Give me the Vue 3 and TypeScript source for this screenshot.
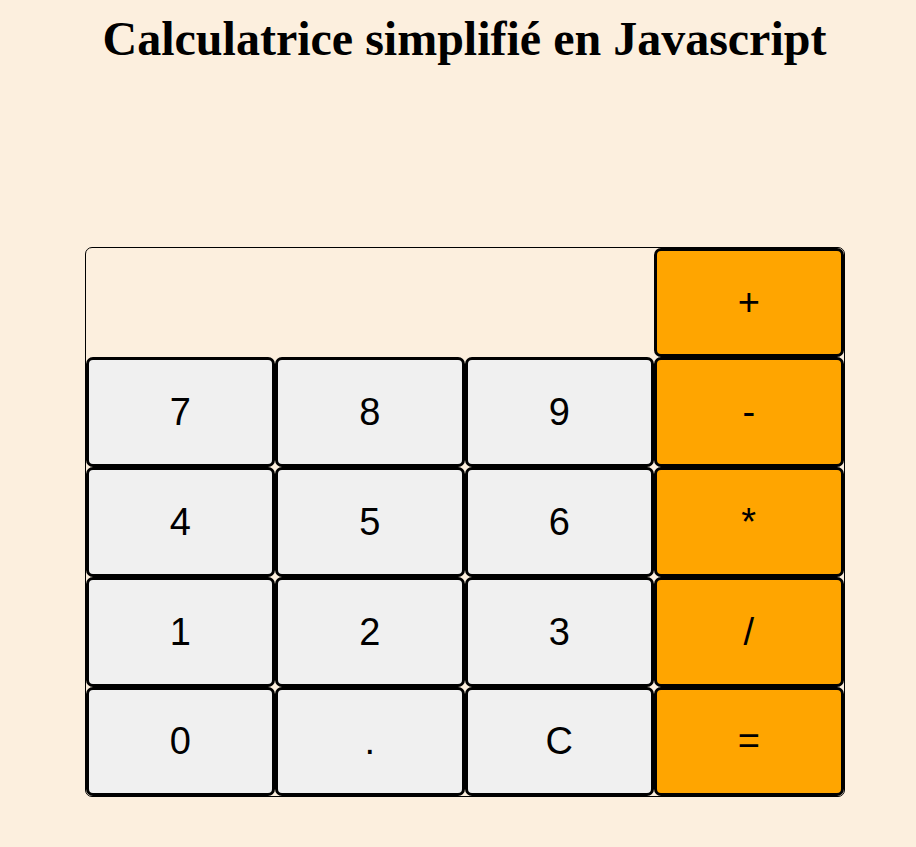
<script setup lang="ts">
import { ref } from 'vue'

interface Key {
  label: string
  operator?: boolean
}

const display = ref('')

const firstOperator: Key = { label: '+', operator: true }

const keys: Key[] = [
  { label: '7' },
  { label: '8' },
  { label: '9' },
  { label: '-', operator: true },
  { label: '4' },
  { label: '5' },
  { label: '6' },
  { label: '*', operator: true },
  { label: '1' },
  { label: '2' },
  { label: '3' },
  { label: '/', operator: true },
  { label: '0' },
  { label: '.' },
  { label: 'C' },
  { label: '=', operator: true },
]

const pad: Key[] = [firstOperator, ...keys]

// Left operand and the operator waiting for its right operand.
let pending: { value: number; operator: string } | null = null

function compute(a: number, b: number, operator: string): number {
  switch (operator) {
    case '+':
      return a + b
    case '-':
      return a - b
    case '*':
      return a * b
    default:
      return a / b
  }
}

function press(key: Key): void {
  if (key.label === 'C') {
    display.value = ''
    pending = null
  } else if (key.label === '=') {
    if (pending && display.value) {
      display.value = String(compute(pending.value, Number(display.value), pending.operator))
      pending = null
    }
  } else if (key.operator) {
    if (display.value) {
      const value = Number(display.value)
      pending = {
        value: pending ? compute(pending.value, value, pending.operator) : value,
        operator: key.label,
      }
      display.value = ''
    }
  } else if (key.label !== '.' || !display.value.includes('.')) {
    display.value += key.label
  }
}
</script>

<template>
  <main class="page">
    <h1 class="title">Calculatrice simplifié en Javascript</h1>
    <section class="calculator">
      <output class="display">{{ display }}</output>
      <button
        v-for="key in pad"
        :key="key.label"
        type="button"
        class="key"
        :class="{ operator: key.operator }"
        @click="press(key)"
      >
        {{ key.label }}
      </button>
    </section>
  </main>
</template>

<style>
body {
  margin: 0;
  background: #fcefde;
}
</style>

<style scoped>
.page {
  box-sizing: border-box;
  min-height: 100vh;
  padding: 11px 0 50px 13px;
  display: flex;
  flex-direction: column;
  align-items: center;
  color: #000;
}

.title {
  margin: 0 0 181px;
  font-family: "Liberation Serif", "Times New Roman", serif;
  font-size: 48px;
  font-weight: 700;
  line-height: 55px;
  text-align: center;
}

.calculator {
  box-sizing: border-box;
  width: 100%;
  max-width: 760px;
  flex: 1;
  display: grid;
  grid-template-columns: repeat(4, 1fr);
  grid-template-rows: 109fr repeat(3, 110fr) 109fr;
  border: 1px solid #000;
  border-radius: 7px;
}

.display {
  grid-column: span 3;
  min-width: 0;
  padding: 0 20px;
  display: flex;
  align-items: center;
  justify-content: flex-end;
  overflow: hidden;
  font-family: "Liberation Sans", Arial, sans-serif;
  font-size: 38px;
}

.key {
  margin: 0;
  padding: 0;
  border: 3px solid #000;
  border-radius: 7px;
  background: #f0f0f0;
  color: #000;
  font-family: "Liberation Sans", Arial, sans-serif;
  font-size: 38px;
  cursor: pointer;
}

.operator {
  background: #ffa500;
}
</style>
